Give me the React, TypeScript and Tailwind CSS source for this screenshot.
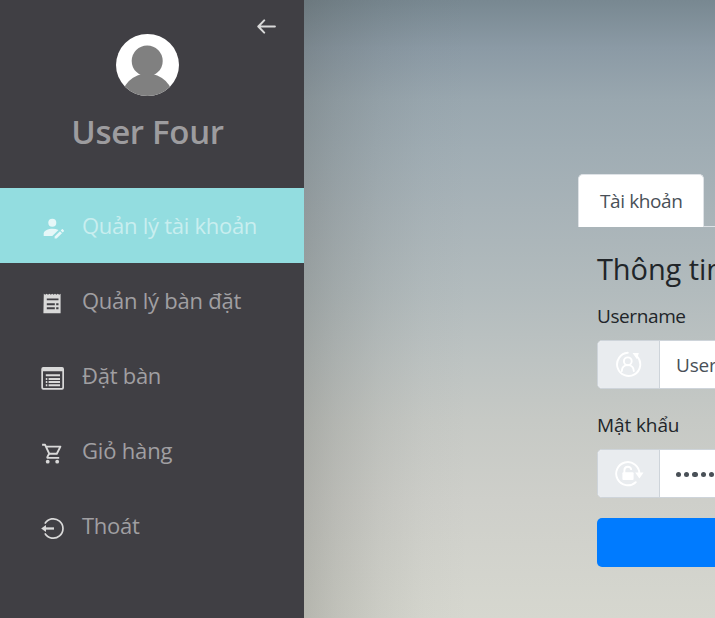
import type { ReactNode } from "react";

function AccountIcon() {
  return (
    <svg width="24" height="24" viewBox="0 0 24 24" fill="#e6f7f8">
      <circle cx="11.3" cy="6.7" r="4" />
      <path d="M2.7 20v-2.500c0-3 4.800-4.800 8.800-4.800 2.200 0 4.200.4 6 1.200l-6.200 6.100z" />
      <path d="M13.600 20.600l5.400-5.400 2 2-5.400 5.400h-2z" />
      <path d="M19.700 14.500l1.200-1.200c.3-.3.600-.3.900 0l1.100 1.100c.3.300.3.600 0 .9l-1.200 1.200z" />
    </svg>
  );
}

function ReceiptIcon() {
  return (
    <svg width="24" height="24" viewBox="0 0 24 24">
      <path
        fill="#d9d9d9"
        d="M2.800 2.800l1.400 1 1.400-1 1.400 1 1.400-1 1.400 1 1.400-1 1.400 1 1.400-1 1.400 1 1.400-1 1.400 1 1.400-1v19.400h-17.200z"
      />
      <path
        stroke="#403f44"
        strokeWidth="1.900"
        d="M5.800 8.400h11.700M5.800 13.300h8M5.800 17.200h8M15.200 13.300h2.300M15.200 17.200h2.300"
      />
    </svg>
  );
}

function ListIcon() {
  return (
    <svg width="24" height="24" viewBox="0 0 24 24">
      <path
        fill="#d9d9d9"
        fillRule="evenodd"
        d="M2.200 1h18.900A2 2 0 0 1 23 2.900v18.900a2 2 0 0 1-1.900 1.900H2.200a2 2 0 0 1-1.900-1.900V2.900A2 2 0 0 1 2.200 1zM2 5.300v16c0 .4.200.6.600.6h18.100c.4 0 .6-.2.6-.6v-16z"
      />
      <path
        stroke="#d9d9d9"
        strokeWidth="2"
        d="M4.800 9.200h14.200M4.800 13h1.500M7.600 13h11.400M4.800 16.100h1.500M7.600 16.100h11.400M4.800 19.200h1.500M7.600 19.200h11.400"
      />
    </svg>
  );
}

function CartIcon() {
  return (
    <svg width="24" height="24" viewBox="0 0 24 24" fill="none" stroke="#d9d9d9" strokeWidth="1.900">
      <path d="M1.100 3.800h3l4.100 8.900h7.600l3.600-7.100H5" strokeLinejoin="round" />
      <path d="M8.100 12.700l-1.700 3.200c-.3.600 0 1 .6 1h11.200" />
      <circle cx="6.700" cy="20.700" r="1.900" fill="#d9d9d9" stroke="none" />
      <circle cx="16.200" cy="20.700" r="1.900" fill="#d9d9d9" stroke="none" />
    </svg>
  );
}

function LogoutIcon() {
  return (
    <svg width="24" height="24" viewBox="0 0 24 24" fill="none" stroke="#d9d9d9" strokeWidth="1.700">
      <path d="M3.900 7.600A9.700 9.700 0 1 1 3.900 17.400" />
      <path d="M4 12.500h9" strokeWidth="2.300" />
      <path d="M.2 12.500l4.800-3.600v7.200z" fill="#d9d9d9" stroke="none" />
    </svg>
  );
}

function UserCycleIcon() {
  return (
    <svg width="30" height="28" viewBox="0 0 30 28" fill="none" stroke="#fff" strokeWidth="1.900">
      <path d="M12.800 1.800A11.600 11.600 0 1 0 22.100 5.400" strokeLinecap="round" />
      <path d="M17.500 1.900l6.300.2-1.800 6.100z" fill="#fff" stroke="none" />
      <circle cx="12.800" cy="10.300" r="3.900" />
      <path d="M6.800 20c.2-3.700 2.500-5.900 6-5.900s5.800 2.200 6 5.900" strokeLinecap="round" />
    </svg>
  );
}

function LockCycleIcon() {
  return (
    <svg width="30" height="28" viewBox="0 0 30 28" fill="none" stroke="#fff" strokeWidth="1.900">
      <path d="M20.700 22.200A11.600 11.600 0 1 1 24.400 13.500" strokeLinecap="round" />
      <path d="M20.200 12.500h8.300l-4.100 6z" fill="#fff" stroke="none" />
      <path d="M9.400 13V10.300c0-4.700 6.800-4.700 6.800-.4" />
      <rect x="7.400" y="12.200" width="11.200" height="7.800" rx="1" fill="#fff" stroke="none" />
    </svg>
  );
}

const menu = [
  { label: "Quản lý tài khoản", icon: <AccountIcon />, spacing: "tracking-[-0.270px]", active: true },
  { label: "Quản lý bàn đặt", icon: <ReceiptIcon />, spacing: "tracking-[-0.250px]" },
  { label: "Đặt bàn", icon: <ListIcon />, spacing: "tracking-[-0.260px]" },
  { label: "Giỏ hàng", icon: <CartIcon />, spacing: "tracking-[-0.180px]" },
  { label: "Thoát", icon: <LogoutIcon />, spacing: "tracking-[-0.250px]" },
];

function Sidebar() {
  return (
    <aside className="h-full w-[304px] shrink-0 bg-[#403f44]">
      <header className="relative flex h-[188px] flex-col items-center pt-[34px] pr-[9px]">
        <button className="absolute top-[17px] right-[27px]" aria-label="Back">
          <svg width="20" height="19" viewBox="0 0 20 19" fill="none" stroke="#d9d9d9" strokeWidth="2" strokeLinecap="round" strokeLinejoin="round">
            <path d="M17.900 9.500H1.400M7.200 3.400L1.300 9.500l5.900 6.100" />
          </svg>
        </button>
        <svg width="63" height="62" viewBox="0 0 63 62">
          <defs>
            <clipPath id="avatar">
              <ellipse cx="31.500" cy="31" rx="31.500" ry="31" />
            </clipPath>
          </defs>
          <g clipPath="url(#avatar)">
            <rect width="63" height="62" fill="#fff" />
            <circle cx="31.200" cy="26.900" r="15.500" fill="#808080" />
            <circle cx="31.300" cy="65.500" r="26" fill="#808080" />
          </g>
        </svg>
        <h1 className="mt-[12px] text-[33px] leading-[48px] font-semibold tracking-[-0.300px] whitespace-nowrap text-[#9d9c9f]">User Four</h1>
      </header>
      <nav>
        {menu.map((item) => (
          <a
            key={item.label}
            className={`flex h-[75px] pl-[41px] text-[22px] whitespace-nowrap ${
              item.active ? "bg-[#93dde0] text-[#c9eeef]" : "text-[#a09fa2]"
            }`}
          >
            <span className="mt-[28px] w-[41px]">{item.icon}</span>
            <span className={`mt-[21px] leading-[32px] ${item.spacing}`}>{item.label}</span>
          </a>
        ))}
      </nav>
    </aside>
  );
}

function InputGroup({ icon, children }: { icon: ReactNode; children: ReactNode }) {
  return (
    <div className="flex h-[49px] w-[400px] overflow-hidden rounded-[5px] border border-[#ced4da] bg-white">
      <div className="w-[62px] shrink-0 border-r border-[#ced4da] bg-[#e9ecef] pt-[10px] pl-[17px]">{icon}</div>
      <div className="flex items-center pt-[2px] pl-[16px] text-[19px] tracking-[-0.200px] whitespace-nowrap text-[#495057]">
        {children}
      </div>
    </div>
  );
}

export default function App() {
  return (
    <div className="flex h-[618px] w-[715px] overflow-hidden font-['Open_Sans','Noto_Sans',sans-serif]">
      <Sidebar />
      <main className="min-w-0 flex-1 overflow-hidden bg-[linear-gradient(90deg,rgba(64,64,58,0.22)_0,rgba(64,64,58,0.145)_32px,rgba(64,64,58,0.07)_75px,rgba(64,64,58,0.02)_120px,transparent_165px),linear-gradient(180deg,#788891_0,#8b9aa5_48px,#99a7af_100px,#a0adb4_150px,#a8b3b8_210px,#b2bbbd_290px,#bdc3c2_360px,#c6c9c5_420px,#cecfca_500px,#d6d7cf_618px)] pt-[174px] pl-[274px]">
        <div className="flex w-[440px] items-end">
          <div className="h-[53px] w-[126px] shrink-0 rounded-t-[5px] border border-b-0 border-[#dee2e6] bg-white pl-[21px] text-[19px] leading-[52px] tracking-[-0.400px] whitespace-nowrap text-[#495057]">
            Tài khoản
          </div>
          <div className="h-px flex-1 bg-[#dee2e6]" />
        </div>
        <section className="w-[440px] pl-[19px] text-[19px] text-[#212529]">
          <h2 className="pt-[23px] text-[29px] leading-[38px] tracking-[-0.100px] whitespace-nowrap">Thông tin tài khoản</h2>
          <label className="mt-[14px] mb-[10px] block leading-[28px] tracking-[-0.400px]">Username</label>
          <InputGroup icon={<UserCycleIcon />}>User Four</InputGroup>
          <label className="mt-[22px] mb-[10px] block leading-[28px] tracking-[-0.100px]">Mật khẩu</label>
          <InputGroup icon={<LockCycleIcon />}>
            <div className="flex gap-[3px]">
              {[1, 2, 3, 4, 5, 6, 7, 8].map((dot) => (
                <i key={dot} className="h-[5.300px] w-[5.200px] rounded-full bg-[#495057]" />
              ))}
            </div>
          </InputGroup>
          <button className="mt-[20px] block h-[49px] w-[400px] rounded-[5px] bg-[#007bff]" aria-label="Save" />
        </section>
      </main>
    </div>
  );
}
